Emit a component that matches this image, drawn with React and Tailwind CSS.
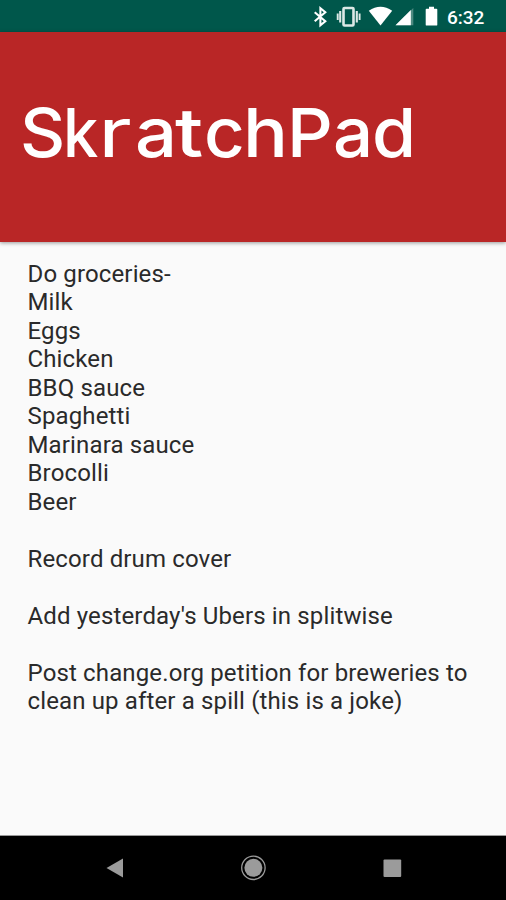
const title = [
  ["S", "w-[43px]", "scale-x-[1.03]"],
  ["k", "w-[35px]", "scale-x-[0.93]"],
  ["r", "w-[37px]", "scale-x-[1.32] font-normal"],
  ["a", "w-[40px]", "scale-x-[1.09]"],
  ["t", "w-[29px]", "scale-x-[1.22] font-medium"],
  ["c", "w-[39px]", "scale-x-[1.04]"],
  ["h", "w-[44px]", "scale-x-[1.1]"],
  ["P", "w-[46px]", "scale-x-[1.05]"],
  ["a", "w-[39px]", "scale-x-[1.04]"],
  ["d", "w-[43px]", "scale-x-[1.05]"],
];

const note = `Do groceries-
Milk
Eggs
Chicken
BBQ sauce
Spaghetti
Marinara sauce
Brocolli
Beer

Record drum cover

Add yesterday's Ubers in splitwise

Post change.org petition for breweries to
clean up after a spill (this is a joke)`;

function StatusBar() {
  return (
    <div className="flex h-8 shrink-0 items-center bg-[#00574b]">
      <svg className="ml-[300px] h-8 w-[142px] shrink-0" viewBox="300 0 142 32" fill="#fff">
        <path d="M314.7 12.2 325.3 21.2 320.4 25.2V8.2L325.3 12.2 314.7 21.2" fill="none" stroke="#fff" strokeWidth="2.1" />
        <g fill="none" stroke="#dce9e6">
          <rect x="343.5" y="8" width="10" height="17.5" rx="1" strokeWidth="2.6" />
          <path d="M340.2 11v11.5M356.8 11v11.5" strokeWidth="2.1" />
          <path d="M337.7 13.5v6.5M359.6 13.5v6.5" strokeWidth="1.9" />
        </g>
        <path d="M368.8 10.8Q380.5 2.6 392.2 10.8L380.5 25.5Z" />
        <path d="M413.3 8V25.3H395.5Z" fill="#4f8b82" />
        <path d="M410.8 10V25.3H395.5Z" />
        <path d="M429 6.7h5v2h2.4q.9 0 .9.9v15.1q0 .9-.9.9h-9.8q-.9 0-.9-.9V9.6q0-.9.9-.9h2.4Z" />
      </svg>
      <span className="ml-[5px] pt-[2px] font-[Roboto] text-[19px] font-medium leading-none text-white">6:32</span>
    </div>
  );
}

function NavBar() {
  return (
    <div className="flex h-16 shrink-0 items-center bg-black">
      <svg className="h-16 w-full" viewBox="0 836 506 64" fill="#9b9b9b">
        <path d="M106.5 868 123 858.5V877.5Z" />
        <circle cx="253.4" cy="867.8" r="9" />
        <circle cx="253.4" cy="867.8" r="11.7" fill="none" stroke="#9b9b9b" strokeWidth="1.3" />
        <rect x="383.5" y="859.5" width="17.7" height="17.5" rx="1" />
      </svg>
    </div>
  );
}

export default function App() {
  return (
    <div className="flex h-[900px] w-[506px] flex-col overflow-hidden bg-[#fafafa]">
      <StatusBar />
      <header className="z-10 flex h-[210px] shrink-0 bg-[#b92626] pl-[20px] pt-[66px] shadow-[0_1px_4px_rgba(0,0,0,0.4)]">
        <h1 className="flex h-[68px] font-[Inter] text-[68px] font-medium leading-[68px] text-white">
          {title.map(([letter, width, shape], i) => (
            <span key={i} className={width}>
              <span className={`inline-block origin-[0_58px] ${shape}`}>{letter}</span>
            </span>
          ))}
        </h1>
      </header>
      <main className="flex-1 border-b border-[#999] pl-[27.5px] pt-[17.5px]">
        <p className="whitespace-pre font-[Roboto] text-[24px] leading-[28.5px] tracking-[0.14px] text-[#2a2a2a]">{note}</p>
      </main>
      <NavBar />
    </div>
  );
}
